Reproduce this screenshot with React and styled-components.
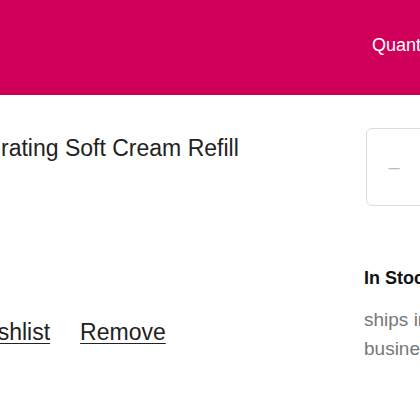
import styled, { createGlobalStyle } from "styled-components";

const GlobalStyle = createGlobalStyle`
  html, body {
    margin: 0;
    padding: 0;
    background: #ffffff;
    overflow: hidden;
  }
  body {
    font-family: "Liberation Sans", Arial, sans-serif;
    color: #222222;
  }
`;

const Page = styled.div`
  width: 420px;
  height: 420px;
  overflow: hidden;
`;

const Columns = styled.div`
  display: grid;
  grid-template-columns: 466px 240px;
  margin-left: -100px;
`;

const Header = styled(Columns)`
  height: 95px;
  align-items: center;
  background: #d0005a;
  border-bottom: 1px solid #c20052;
  box-sizing: border-box;
`;

const HeaderLabel = styled.span`
  color: #ffffff;
  font-size: 18px;
  padding-left: ${(p) => p.$indent || 0}px;
  padding-bottom: 4px;
`;

const ItemCol = styled.div`
  display: flex;
  flex-direction: column;
  padding-top: 40px;
`;

const Title = styled.h2`
  margin: 0;
  font-size: 23px;
  font-weight: 400;
  color: #222222;
`;

const Actions = styled.div`
  display: flex;
  gap: 30px;
  margin-top: 157px;
  margin-left: -2px;
`;

const ActionLink = styled.a`
  font-size: 23px;
  color: #222222;
  text-decoration: underline;
  text-underline-offset: 3px;
  text-decoration-thickness: 1px;
  cursor: pointer;
`;

const QtyCol = styled.div`
  display: flex;
  flex-direction: column;
  padding-top: 33px;
`;

const Stepper = styled.div`
  display: flex;
  align-items: center;
  width: 150px;
  height: 78px;
  border: 1px solid #dddddd;
  border-radius: 6px;
  box-sizing: border-box;
`;

const StepBtn = styled.button`
  width: 54px;
  height: 100%;
  border: none;
  background: transparent;
  color: #bbbbbb;
  font-size: 20px;
  font-family: inherit;
  padding: 0;
`;

const StepValue = styled.span`
  flex: 1;
  text-align: center;
  font-size: 18px;
`;

const Availability = styled.div`
  margin-left: -2px;
  margin-top: 62px;
  width: 140px;
`;

const StockLabel = styled.div`
  font-size: 18px;
  font-weight: 700;
  color: #111111;
`;

const ShipNote = styled.p`
  margin: 16px 0 0;
  font-size: 19px;
  line-height: 29px;
  color: #777777;
`;

export default function App() {
  return (
    <Page>
      <GlobalStyle />
      <Header>
        <HeaderLabel>Item</HeaderLabel>
        <HeaderLabel $indent={6}>Quantity</HeaderLabel>
      </Header>
      <Columns>
        <ItemCol>
          <Title>Aqua Hydrating Soft Cream Refill</Title>
          <Actions>
            <ActionLink>Add to Wishlist</ActionLink>
            <ActionLink>Remove</ActionLink>
          </Actions>
        </ItemCol>
        <QtyCol>
          <Stepper>
            <StepBtn>–</StepBtn>
            <StepValue>1</StepValue>
            <StepBtn>+</StepBtn>
          </Stepper>
          <Availability>
            <StockLabel>In Stock</StockLabel>
            <ShipNote>ships in 1-2 business days</ShipNote>
          </Availability>
        </QtyCol>
      </Columns>
    </Page>
  );
}
